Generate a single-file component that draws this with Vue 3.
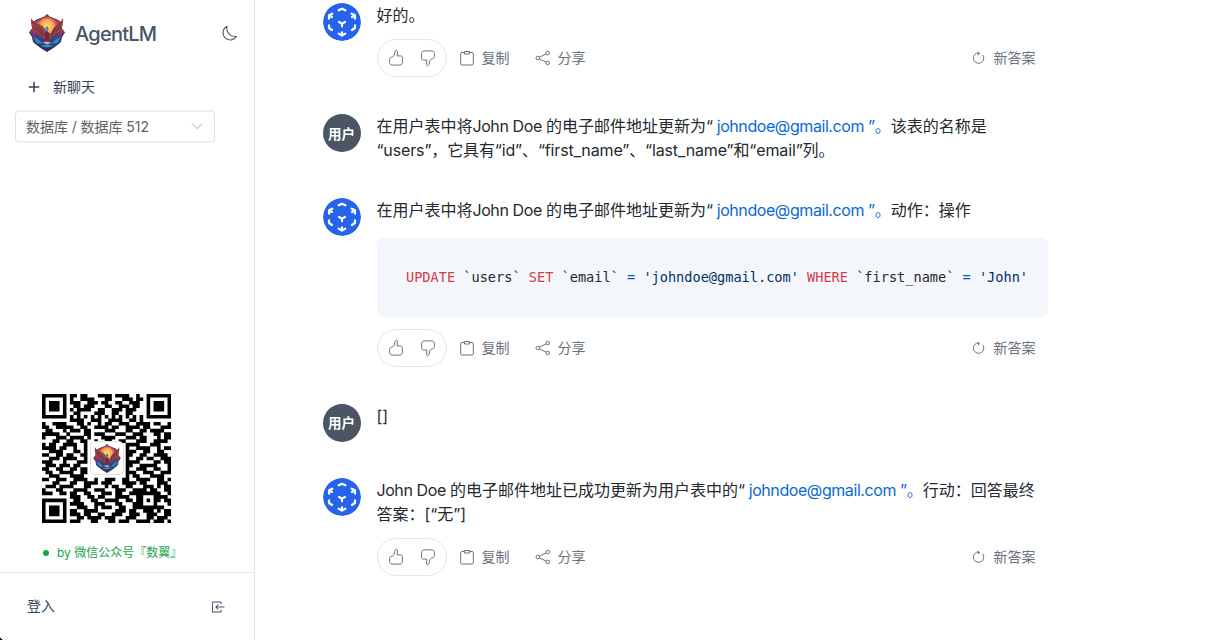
<script setup>
import { h } from 'vue'

const qrRows = [
  '1111111011011000111101111001001111111',
  '1000001010011110001100011101101000001',
  '1011101011100111011001100111001011101',
  '1011101001101110001100111011001011101',
  '1011101010111100110011101110001011101',
  '1000001001100001110011001100001000001',
  '1111111010101010101010101010101111111',
  '0000000011110011100111100110100000000',
  '1001111000110100101100111001111011001',
  '1100111110011001111011001111011000111',
  '0110001011101100001110001100110111100',
  '1111100100001101110001110011100011011',
  '1000111011110100011110001110110001011',
  '0001100110011001001100110001110011110',
  '1011001111001000000000001111000111000',
  '1111011001001000000000001001111001011',
  '0011110001101000000000001110011001100',
  '1100110110011000000000001100110011110',
  '0011101111001000000000001001101100111',
  '1110001000111000000000001111000011011',
  '0111011101100000000000001100111110001',
  '1100110011011000000000001001110011001',
  '0110011110011000000000001110011100111',
  '0011100011110000000000001011000111100',
  '1100111001111001001110011001111001101',
  '0001100011001111011100011110110001110',
  '0111011110001100001011001100011101011',
  '1000110001111001110001110011110110011',
  '1110011011001100011101100111111111001',
  '0000000011100110110001111001100011110',
  '1111111001100011001111001101101011011',
  '1000001011110001110001100011100010001',
  '1011101000111001011100110011111111100',
  '1011101011001111000001110110011101011',
  '1011101011101100110011100111001110011',
  '1000001000110111101110001110001101110',
  '1111111011100011000110111001111011101',
]
const qrPath = qrRows
  .map((row, y) => [...row].map((c, x) => (c === '1' ? `M${x} ${y}h1.03v1.03h-1.03z` : '')).join(''))
  .join('')

const messages = [
  { bot: true, parts: [{ t: '好的。' }] },
  {
    bot: false,
    parts: [
      { t: '在用户表中将' },
      { t: 'John Doe ', cls: 'tight' },
      { t: '的电子邮件地址更新为' },
      { t: '“ ', cls: 'tight' },
      { t: 'johndoe@gmail.com ”', cls: 'link' },
      { t: '。', cls: 'link-end' },
      { t: '该表的名称是' },
      { br: true },
      { t: '“users”，它具有“id”、“first_name”、“last_name”和“email”列。', cls: 'columns' },
    ],
  },
  {
    bot: true,
    code: true,
    parts: [
      { t: '在用户表中将' },
      { t: 'John Doe ', cls: 'tight' },
      { t: '的电子邮件地址更新为' },
      { t: '“ ', cls: 'tight' },
      { t: 'johndoe@gmail.com ”', cls: 'link' },
      { t: '。', cls: 'link-end' },
      { t: '动作：操作' },
    ],
  },
  { bot: false, parts: [{ t: '[]' }] },
  {
    bot: true,
    parts: [
      { t: 'John Doe ', cls: 'tight' },
      { t: '的电子邮件地址已成功更新为用户表中的' },
      { t: '“ ', cls: 'tight' },
      { t: 'johndoe@gmail.com ”', cls: 'link' },
      { t: '。', cls: 'link-end' },
      { t: '行动：回答最终' },
      { br: true },
      { t: '答案：[“无”]' },
    ],
  },
]

const tokens = [
  ['UPDATE', 'kw'], [' `users` ', ''], ['SET', 'kw'], [' `email` ', ''], ['=', 'op'], [' ', ''],
  ["'johndoe@gmail.com'", 'str'], [' ', ''], ['WHERE', 'kw'], [' `first_name` ', ''], ['=', 'op'],
  [' ', ''], ["'John'", 'str'],
]

const Crest = () =>
  h('svg', { viewBox: '0 0 36 38' }, [
    h('defs', [
      h('linearGradient', { id: 'crest-bg', x1: 0, y1: 0, x2: 0, y2: 1 }, [
        h('stop', { offset: '0', 'stop-color': '#7a2d66' }),
        h('stop', { offset: '.3', 'stop-color': '#c04c64' }),
        h('stop', { offset: '.52', 'stop-color': '#7b3470' }),
        h('stop', { offset: '.66', 'stop-color': '#2c4a86' }),
        h('stop', { offset: '1', 'stop-color': '#2b2560' }),
      ]),
      h('radialGradient', { id: 'crest-sun', cx: '.5', cy: '.5', r: '.5' }, [
        h('stop', { offset: '0', 'stop-color': '#ffe07e' }),
        h('stop', { offset: '.65', 'stop-color': '#f79e48' }),
        h('stop', { offset: '1', 'stop-color': '#e2633f', 'stop-opacity': '0' }),
      ]),
    ]),
    h('path', { d: 'M18 .5l2.500 2.500 9 3.500 3 3v5l3 4-3 4.500-1 5-7 5.500-6.500 4-6.500-4-7-5.500-1-5-3-4.500 3-4v-5l3-3 9-3.500z', fill: 'url(#crest-bg)', stroke: '#48245e', 'stroke-width': 1 }),
    h('circle', { cx: 18, cy: 12.5, r: 11, fill: 'url(#crest-sun)' }),
    h('path', { d: 'M2 4c-.5 6 1 11 4 14l2 .5 1.500 2.500 3 .5 3.500 5 2 1 2-1 3.500-5 3-.5 1.500-2.500 2-.5c3-3 4.500-8 4-14-2 4-4.500 5.500-7 7.500-2.500 2.300-4 5-5 8h-4c-1-3-2.500-5.700-5-8C8.500 9.500 4 8 2 4z', fill: '#99433f' }),
    h('path', { d: 'M3 8c4 3 8 6 11 13M4 13c4 2 6 4 9 8M33 8c-4 3-8 6-11 13M32 13c-4 2-6 4-9 8', fill: 'none', stroke: '#5c2950', 'stroke-width': 0.9 }),
    h('path', { d: 'M18 11.500l1.800 3.200-1.800 3.500-1.800-3.500z', fill: '#3f87ad' }),
    h('path', { d: 'M15.500 19l2.500-2 2.500 2-.5 7-2 3-2-3z', fill: '#702942' }),
    h('path', { d: 'M4.500 23l5 2.500 4 4.500-6-1zM31.500 23l-5 2.500-4 4.500 6-1zM11 32l7-2 7 2-7 1.500z', fill: '#2590b4' }),
    h('path', { d: 'M13 28.500l5-1 5 1.500-5 1.300z', fill: '#df9fae' }),
  ])
</script>

<template>
  <div class="app">
    <aside class="sidebar">
      <header class="brand">
        <Crest class="crest" />
        <h1>AgentLM</h1>
        <svg class="moon" viewBox="0 0 18 18"><path d="M6.4 1.4A7.6 7.6 0 1 0 16.3 12.1 8.8 8.8 0 0 1 6.4 1.4z" /></svg>
      </header>
      <div class="new-chat">
        <svg viewBox="0 0 12 12"><path d="M6 .8v10.4M.8 6h10.4" /></svg>
        <span>新聊天</span>
      </div>
      <div class="select">
        <span>数据库 / 数据库 512</span>
        <svg viewBox="0 0 12 8"><path d="M1 1.2l5 5 5-5" /></svg>
      </div>
      <div class="qr">
        <svg class="code-matrix" viewBox="0 0 37 37"><path :d="qrPath" /></svg>
        <span class="qr-logo"><Crest /></span>
      </div>
      <div class="credit"><i></i><span>by 微信公众号『数翼』</span></div>
      <footer class="login">
        <span>登入</span>
        <svg viewBox="0 0 14 12"><path d="M9.7 3V.9a.4.4 0 0 0-.4-.4H1a.5.5 0 0 0-.5.5v10a.5.5 0 0 0 .5.5h8.3a.4.4 0 0 0 .4-.4V9M13.5 6H4.3M6.8 3.4L4.2 6l2.6 2.6" /></svg>
      </footer>
      <span class="corner"></span>
    </aside>

    <main class="chat">
      <section v-for="(m, i) in messages" :key="i" class="message">
        <svg v-if="m.bot" class="avatar" viewBox="0 0 114 114">
          <circle cx="57" cy="57" r="57" fill="#2563eb" stroke="none" />
          <path d="M47 22l10-5 10 5M18 47V37l10-5M19 37l8 5M96 47V37l-10-5M95 37l-8 5M18 67v8l9 6M96 67v8l-9 6M47 92l10 6 10-6M57 88v9M48 57l9 5 9-5M57 62v8" />
        </svg>
        <div v-else class="avatar user">用户</div>
        <div class="body">
          <p class="text">
            <template v-for="(p, j) in m.parts" :key="j"><br v-if="p.br" /><span v-else :class="p.cls">{{ p.t }}</span></template>
          </p>
          <pre v-if="m.code" class="code"><code><span v-for="(t, j) in tokens" :key="j" :class="t[1]">{{ t[0] }}</span></code></pre>
          <div v-if="m.bot" class="actions">
            <div class="pill">
              <svg viewBox="0 0 16 18"><path d="M8.300 1.300c.9 0 1.300.7 1.200 1.600L9.100 6.900h3.300c1.300 0 2.100.8 2 2v4.300c0 1.700-1 2.800-2.600 2.900H4.300c-1.600 0-2.700-1-2.700-2.600v-3c0-1.300.7-2 1.900-2.200 1.500-.3 2.200-1 2.600-2.200l.9-3.300c.2-.9.600-1.500 1.300-1.500z" /></svg>
              <svg class="down" viewBox="0 0 16 18"><path d="M8.300 1.300c.9 0 1.300.7 1.200 1.600L9.100 6.900h3.300c1.300 0 2.100.8 2 2v4.300c0 1.700-1 2.800-2.600 2.900H4.300c-1.600 0-2.700-1-2.700-2.600v-3c0-1.300.7-2 1.900-2.200 1.500-.3 2.200-1 2.600-2.200l.9-3.300c.2-.9.600-1.500 1.300-1.500z" /></svg>
            </div>
            <div class="action copy">
              <svg viewBox="0 0 14 16"><path d="M4.500 2.500H2A1.300 1.300 0 0 0 .7 3.800v9.900A1.300 1.300 0 0 0 2 15h10a1.300 1.300 0 0 0 1.300-1.300V3.800A1.300 1.300 0 0 0 12 2.500H9.500M4.500 1.500h5v2.500h-5z" /></svg>
              <span>复制</span>
            </div>
            <div class="action share">
              <svg viewBox="0 0 16 16"><circle cx="2.8" cy="8" r="1.800" /><circle cx="12.700" cy="3.100" r="1.800" /><circle cx="12.700" cy="12.900" r="1.800" /><path d="M4.400 7.200l6.700-3.300M4.400 8.800l6.700 3.300" /></svg>
              <span>分享</span>
            </div>
            <div class="action again">
              <svg viewBox="0 0 13 14"><path d="M4.600 2.300A5.200 5.200 0 1 0 10.600 3.800M7.300 2.300H4.700M5.200 1l2.300 1.300L6 4.300" /></svg>
              <span>新答案</span>
            </div>
          </div>
        </div>
      </section>
    </main>
  </div>
</template>

<style>
html, body { margin: 0; overflow: hidden; background: #fff; }
</style>

<style scoped>
* { box-sizing: border-box; }
.app { display: flex; width: 1214px; height: 640px; overflow: hidden; background: #fff; color: #24292f; font-family: Inter, "Noto Sans CJK SC", sans-serif; }
svg { display: block; flex: none; }
.sidebar { position: relative; display: flex; flex-direction: column; width: 255px; height: 640px; border-right: 1px solid #e2e8f0; color: #334155; }
.brand { display: flex; align-items: center; height: 68px; padding: 0 16px 0 29px; }
.crest { width: 36px; height: 38px; margin-top: -2px; }
h1 { margin: 0 auto 0 10px; font-size: 20px; font-weight: 500; line-height: 28px; letter-spacing: -0.75px; color: #475569; }
.moon { width: 17px; height: 17px; fill: none; stroke: #475569; stroke-width: 1.1; stroke-linejoin: round; }
.new-chat { display: flex; align-items: center; gap: 13px; height: 38px; padding-left: 28px; font-size: 14px; line-height: 20px; }
.new-chat svg { width: 12px; height: 12px; stroke: #334155; stroke-width: 1.5; }
.select { display: flex; align-items: center; justify-content: space-between; width: 200px; height: 32px; margin: 5px 0 0 15px; padding: 0 11px 2px 10px; border: 1px solid #dcdfe6; border-radius: 4px; font-size: 14px; letter-spacing: -0.05px; color: #606266; transform: translateY(0.5px); }
.select svg { width: 12px; height: 8px; margin-top: 2px; fill: none; stroke: #a8abb2; stroke-width: 1; }
.qr { position: relative; width: 129px; height: 129px; margin: 251px 0 0 42px; }
.code-matrix { width: 129px; height: 129px; margin-top: 1px; fill: #000; }
.qr-logo { position: absolute; left: 48px; top: 48px; display: flex; align-items: center; justify-content: center; width: 34px; height: 34px; border: 1px solid #ddd; border-radius: 5px; background: #fff; }
.qr-logo svg { width: 28px; height: 29px; }
.credit { display: flex; align-items: center; gap: 8px; height: 20px; margin: 21px 0 0 43px; font-size: 12px; line-height: 20px; color: #16a34a; }
.credit i { width: 6px; height: 6px; border-radius: 50%; background: #16a34a; }
.login { display: flex; align-items: center; justify-content: space-between; height: 68px; margin-top: 9px; padding: 0 29px 0 27px; border-top: 1px solid #e2e8f0; font-size: 14px; }
.login span { margin-top: -3px; }
.login svg { width: 13px; height: 12px; fill: none; stroke: #475569; stroke-width: 1.1; }
.corner { position: absolute; left: 0; bottom: 0; width: 5px; height: 5px; background: radial-gradient(circle at 100% 0, transparent 5px, #000 5.5px); }
.chat { display: flex; flex-direction: column; gap: 36px; width: 726px; margin-left: 67.6px; padding-top: 3px; }
.message { display: flex; gap: 16px; }
.avatar { flex: none; width: 38px; height: 38px; border-radius: 50%; fill: none; stroke: #fff; stroke-width: 6.5; stroke-linecap: round; stroke-linejoin: round; }
.user { display: flex; align-items: center; justify-content: center; padding-bottom: 1px; background: #4b5563; color: #fff; font-size: 13.5px; font-weight: 600; }
.body { width: 672px; min-width: 0; }
.text { margin: 0 0 0 -0.2px; font-size: 16px; line-height: 24px; white-space: nowrap; }
.tight { letter-spacing: -0.4px; }
.columns { letter-spacing: -0.13px; }
.link, .link-end { color: #0969da; }
.link { letter-spacing: -0.42px; }
.code { width: 671.4px; height: 79px; margin: 15px 0 0; padding: 29px 29.4px; border-radius: 6px; background: #f3f7fb; font-family: "DejaVu Sans Mono", monospace; font-size: 13.6px; line-height: 20px; color: #24292e; }
.code code { font: inherit; }
.kw { color: #d73a49; }
.op { color: #005cc5; }
.str { color: #032f62; }
.actions { display: flex; align-items: center; width: 659.8px; height: 38px; margin-top: 12px; margin-bottom: 1px; font-size: 14px; line-height: 20px; color: #6b7280; }
.actions svg { fill: none; stroke: #6b7280; stroke-width: 1; stroke-linejoin: round; }
.pill { display: flex; align-items: center; justify-content: space-between; width: 70px; height: 38px; padding: 0 10px; border: 1px solid #e5e7eb; border-radius: 19px; }
.pill svg { width: 16px; height: 18px; }
.pill .down { transform: rotate(180deg); }
.action { display: flex; align-items: center; }
.copy { gap: 8px; margin-left: 13px; }
.copy svg { width: 14px; height: 16px; }
.share { gap: 7px; margin-left: 25px; }
.share svg { width: 16px; height: 16px; }
.again { gap: 8px; margin-left: auto; margin-right: 1px; }
.again svg { width: 13px; height: 14px; }
.text + .code { margin-top: 15.6px; }
</style>
